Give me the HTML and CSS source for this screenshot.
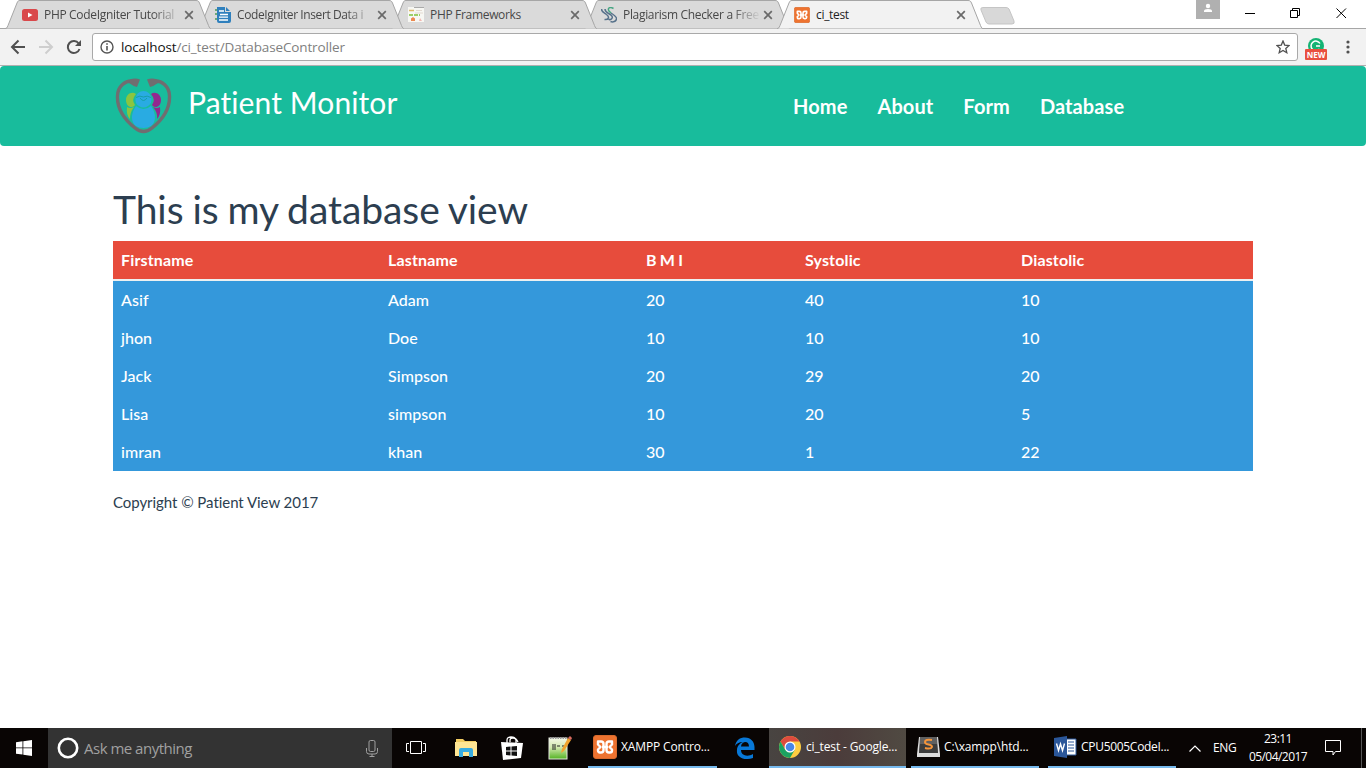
FILE: index.html
```html
<!DOCTYPE html>
<html lang="en">
<head>
<meta charset="utf-8">
<title>ci_test</title>
<link rel="stylesheet" href="styles.css">
</head>
<body>
<svg width="0" height="0" class="defs">
  <symbol id="tab" viewBox="0 0 206 29"><path d="M0 28.500C1.500 28.500 2 28 3 25.500L12 3C13 .7 13.500 .5 15 .5H191C193 .5 193.500 1 194.500 3L203.500 25.500C204.500 28 205 28.500 206 28.500"/></symbol>
  <symbol id="close" viewBox="0 0 10 10"><path d="M1.200 1.200L8.800 8.800M8.800 1.200L1.200 8.800" fill="none" stroke="#6a6a6a" stroke-width="1.700"/></symbol>
  <symbol id="xampp" viewBox="0 0 24 24"><rect x=".5" y=".5" width="23" height="23" rx="2.500" fill="#ee7330" stroke="#d96a2c"/><path d="M9 12H15M5 6.500H8Q10.500 6.500 10.500 9V15Q10.500 17.500 8 17.500H7Q5 17.500 5 15.500V14.500L7.500 12L5 9.500ZM19 6.500H16Q13.500 6.500 13.500 9V15Q13.500 17.500 16 17.500H17Q19 17.500 19 15.500V14.500L16.500 12L19 9.500Z" fill="none" stroke="#fff" stroke-width="2.400" stroke-linejoin="round"/></symbol>
</svg>

<header class="browser">
  <div class="strip">
    <div class="tab t1"><svg class="shape"><use href="#tab"/></svg>
      <svg class="fav" viewBox="0 0 16 16"><rect y="2" width="16" height="12" rx="2.500" fill="#d9484b"/><path d="M6 5.500V10.500L10.500 8Z" fill="#fff"/></svg>
      <span class="label fade">PHP CodeIgniter Tutorial</span><svg class="x"><use href="#close"/></svg></div>
    <div class="tab t2"><svg class="shape"><use href="#tab"/></svg>
      <svg class="fav" viewBox="0 0 16 16"><path d="M2 0H10V5H16V14Q16 16 14 16H4Q2 16 2 14Z" fill="#2f80bd"/><path d="M11 0L15 4H11Z" fill="#2f80bd"/><path d="M0 3H2M0 7H2M0 12H2" stroke="#4a9b57" stroke-width="1.500"/><path d="M4 4H9M5 7.500H13M4 10.200H13M4 13H13" stroke="#fff" stroke-width="1.300"/></svg>
      <span class="label fade">CodeIgniter Insert Data i</span><svg class="x"><use href="#close"/></svg></div>
    <div class="tab t3"><svg class="shape"><use href="#tab"/></svg>
      <svg class="fav" viewBox="0 0 16 16"><path d="M0 0H16V15H0Z" fill="#f7f7f3"/><path d="M6 .5H16" stroke="#aaa"/><path d="M1 3.500H6" stroke="#dfb967" stroke-width="1.500"/><path d="M8 3.500H14M7 6H15" stroke="#e3d9d0"/><path d="M1 8H12" stroke="#9ccf68" stroke-width="2" stroke-dasharray="4 1"/><path d="M3 14V11.500L5 10L7 11.500V14" fill="#ed8a51"/><path d="M11 14L12 11L14 14" fill="#f2b8b2"/></svg>
      <span class="label">PHP Frameworks</span><svg class="x"><use href="#close"/></svg></div>
    <div class="tab t4"><svg class="shape"><use href="#tab"/></svg>
      <svg class="fav" viewBox="0 0 16 16"><g fill="none" stroke="#56718a" stroke-width="1.500"><path d="M.5 2C.5 5 3 5.500 5.500 7.500C9 10 7.500 13 3.500 12.500"/><path d="M4 2C4 6 8 6 10.500 8.500C13 11.500 9 13.500 7.500 12"/><path d="M10 6C13 8 16 10 15.500 12C15 14.500 12 15.500 9.500 14.500"/></g><path d="M12.500 1.500C9 -.5 6 1 8 4L10 6" fill="none" stroke="#46a582" stroke-width="1.500"/></svg>
      <span class="label fade">Plagiarism Checker a Free</span><svg class="x"><use href="#close"/></svg></div>
    <div class="tab active"><svg class="shape"><use href="#tab"/></svg>
      <svg class="fav"><use href="#xampp"/></svg>
      <span class="label">ci_test</span><svg class="x"><use href="#close"/></svg></div>
    <svg class="newtab" viewBox="0 0 36 19"><path d="M3 .5H26Q28 .5 29 2L34 14Q35 17 32 17H9Q7 17 6 15L1 3Q0 .5 3 .5Z" fill="#d8d8d8" stroke="#c5c5c5"/></svg>
    <div class="window">
      <svg class="profile" viewBox="0 0 24 19"><path d="M0 0H24V19H0Z" fill="#b0b0b0"/><circle cx="12" cy="6" r="2.200" fill="#fff"/><path d="M8 12V11Q8 9 12 9T16 11V12Z" fill="#fff"/></svg>
      <svg class="controls" viewBox="0 0 146 28" fill="none" stroke="#000"><path d="M25 13.500H35M70.500 10.500H77.500V17.500H70.500ZM72.500 10V8.500H79.500V15.500H78M116.500 8.500L126 18M126 8.500L116.500 18"/></svg>
    </div>
  </div>
  <div class="toolbar">
    <svg class="nav" viewBox="0 0 92 37" fill="none" stroke-width="2"><path d="M25 18H12M18.500 11.500L12 18L18.500 24.500" stroke="#505050"/><path d="M39 18H52M45.500 11.500L52 18L45.500 24.500" stroke="#cecece"/><path d="M78.700 14.500A6 6 0 1 0 79.500 20" stroke="#505050"/><path d="M81 11V17H75Z" fill="#505050"/></svg>
    <div class="address">
      <svg class="info" viewBox="0 0 14 14"><circle cx="7" cy="7" r="6" fill="none" stroke="#555" stroke-width="1.400"/><path d="M7 6V10.500M7 3.200V4.800" stroke="#555" stroke-width="1.600"/></svg>
      <span class="url"><b>localhost</b>/ci_test/DatabaseController</span>
      <svg class="star" viewBox="0 0 14 14"><path d="M7 1L8.700 5.100L13.100 5.500L9.800 8.400L10.800 12.700L7 10.400L3.200 12.700L4.200 8.400L.9 5.500L5.300 5.100Z" fill="none" stroke="#505050" stroke-width="1.300"/></svg>
    </div>
    <div class="ext"><svg viewBox="0 0 22 22"><circle cx="11" cy="8" r="8" fill="#15b374"/><path d="M15 5.500A4.800 4.800 0 1 0 14.500 11M15 8H11" fill="none" stroke="#fff" stroke-width="1.500"/><rect y="11" width="22" height="11" rx="1" fill="#e9503f"/></svg><span class="new">NEW</span></div>
    <svg class="menu" viewBox="0 0 4 14" fill="#505050"><circle cx="2" cy="2" r="1.600"/><circle cx="2" cy="7" r="1.600"/><circle cx="2" cy="12" r="1.600"/></svg>
  </div>
</header>

<main class="page">
  <nav class="navbar">
    <svg class="logo" viewBox="0 0 58 58">
      <path d="M20 3.500C10 1 2.500 9 2.500 18C2 31 10 42 20 50Q28.500 57 37 50C47 42 55 31 54.500 18C54.500 9 47 1 37 3.500" fill="none" stroke="#706d70" stroke-width="3.400"/>
      <path d="M15 1.500Q20 -.5 25 1.500L22 9Q18 8 14 5ZM42 1.500Q37 -.5 32 1.500L35 9Q39 8 43 5Z" fill="#706d70"/>
      <path d="M21 16C17 13 11 16 11 22C11 29 17 31 20 27Q16 22 21 16ZM12 29Q15 31 19 29Q15 34 15 41Q11 37 12 29Z" fill="#8bc53f"/>
      <path d="M36 16C40 13 46 16 46 22C46 29 40 31 37 27Q41 22 36 16ZM45 29Q42 31 38 29Q43 35 42 41Q46 37 45 29Z" fill="#93278f"/>
      <path d="M28.500 13C20 13 18 25 24 28Q28.500 31 33 28C39 25 37 13 28.500 13ZM21 28Q28.500 34 36 28C43 38 41 50 28.500 50C16 50 14 38 21 28Z" fill="#29abe2"/>
      <path d="M21 19.500Q25 17 28.500 19Q32 17 36 19.500M25 20Q28.500 25 32 20" fill="none" stroke="#159ea9"/>
    </svg>
    <span class="brand">Patient Monitor</span>
    <div class="links"><a>Home</a><a>About</a><a>Form</a><a>Database</a></div>
  </nav>
  <section class="container">
    <h1>This is my database view</h1>
    <table>
      <colgroup><col class="c1"><col class="c2"><col class="c3"><col class="c4"><col></colgroup>
      <thead><tr><th>Firstname</th><th>Lastname</th><th class="bmi">B M I</th><th>Systolic</th><th>Diastolic</th></tr></thead>
      <tbody>
        <tr><td>Asif</td><td>Adam</td><td>20</td><td>40</td><td>10</td></tr>
        <tr><td>jhon</td><td>Doe</td><td>10</td><td>10</td><td>10</td></tr>
        <tr><td>Jack</td><td>Simpson</td><td>20</td><td>29</td><td>20</td></tr>
        <tr><td>Lisa</td><td>simpson</td><td>10</td><td>20</td><td>5</td></tr>
        <tr><td>imran</td><td>khan</td><td>30</td><td>1</td><td>22</td></tr>
      </tbody>
    </table>
    <footer>Copyright © Patient View 2017</footer>
  </section>
</main>

<div class="taskbar">
  <div class="start"><svg viewBox="0 0 16 16" fill="#fff"><path d="M0 2.200L6.500 1.300V7.500H0ZM7.300 1.200L16 0V7.500H7.300ZM0 8.300H6.500V14.600L0 13.700ZM7.300 8.300H16V16L7.300 14.700Z"/></svg></div>
  <div class="search">
    <svg class="cortana" viewBox="0 0 22 22"><circle cx="11" cy="11" r="9.200" fill="none" stroke="#fff" stroke-width="2.600"/></svg>
    <span>Ask me anything</span>
    <svg class="mic" viewBox="0 0 12 17" fill="none" stroke="#a0a0a0"><rect x="3" y=".5" width="6" height="11" rx="1.500"/><path d="M.5 8V11.500Q.5 14 3 14H9Q11.500 14 11.500 11.500V8M6 14V16M3.500 16.500H8.500"/></svg>
  </div>
  <div class="cell"><svg width="20" height="14" viewBox="0 0 20 14" fill="none" stroke="#fff"><path d="M4.500 .5H15.500V12.500H4.500ZM3 2.500H.5V10.500H3M17 2.500H19.500V10.500H17"/></svg></div>
  <div class="cell folder"><svg width="22" height="20" viewBox="0 0 22 20"><path d="M1 1H8L10 3H21V18H1Z" fill="#f3cd62"/><path d="M0 4H22V18H0Z" fill="#ffe694"/><path d="M4 19V12Q4 10 6 10H16Q18 10 18 12V19H14V14H8V19Z" fill="#38ace0"/></svg></div>
  <div class="cell"><svg width="22" height="24" viewBox="0 0 22 24"><path d="M6 7V4Q6 1 10 1T15 4V7M9 6V4Q9 2 12 2T17 6" fill="none" stroke="#fff" stroke-width="1.300"/><path d="M0 6L22 7L20 22L2 24Z" fill="#fff"/><path d="M5 11L9.500 10.500V14.500H5ZM10.500 10.500L16 10V14.500H10.500ZM5 15.500H9.500V19.500L5 19ZM10.500 15.500H16V20L10.500 19.500Z" fill="#111"/></svg></div>
  <div class="cell notepad"><svg width="24" height="24" viewBox="0 0 24 24"><defs><linearGradient id="g" x2="0" y2="1"><stop stop-color="#f5f8e8"/><stop offset=".45" stop-color="#d2e9ae"/><stop offset="1" stop-color="#53b222"/></linearGradient></defs><rect x="1" y="2" width="18" height="21" fill="url(#g)" stroke="#e5eadf"/><path d="M2 2H19" stroke="#999" stroke-width="2" stroke-dasharray="1.500 1"/><path d="M5 8V14M7 8V14M9 10H12M14 10H16" stroke="#222"/><path d="M20 2L23 4L16 15L13 17L14 13Z" fill="#f2a42d"/><path d="M20 2L22 0L24 2L23 4Z" fill="#db6c61"/></svg></div>
  <div class="task xamppTask"><svg width="24" height="24"><use href="#xampp"/></svg><span>XAMPP Contro...</span></div>
  <div class="edge"><svg width="21" height="22" viewBox="0 0 21 22"><path d="M1 9C2 3 6 .5 11 .5C17 .5 20.500 5 20.500 10V13H7C7 19 14 20 19 17V21C10 24 2 20 3 13C3 9 6 6 9 5C5 5 2 7 1 9ZM7 9.500H15C15 3 7.500 4 7 9.500Z" fill="#0878d7" fill-rule="evenodd"/></svg></div>
  <div class="task chrome"><svg width="22" height="22" viewBox="0 0 22 22"><circle cx="11" cy="11" r="11" fill="#ffcd41"/><path d="M1.500 5.500A11 11 0 0 1 20.500 5.500H11L6.200 13.700Z" fill="#dd4b3e"/><path d="M1.500 5.500L6.200 13.700L11 16.500L15.800 13.700L11 22A11 11 0 0 1 1.500 5.500Z" fill="#1ba261"/><circle cx="11" cy="11" r="5.500" fill="#fff"/><circle cx="11" cy="11" r="4.300" fill="#4a87e8"/></svg><span>ci_test - Google...</span></div>
  <div class="task sublime"><svg width="23" height="22" viewBox="0 0 23 22"><path d="M2 1H21L23 18V21H0V18Z" fill="#ddd"/><path d="M3 1H20L21 17H2Z" fill="#606060"/><path d="M3 8H20L21 17H2Z" fill="#3d3d3d"/><path d="M15 4Q8 3 8 6Q8 8 11.500 8.500Q15 9 15 11Q14 13.500 8 12" fill="none" stroke="#f6953a" stroke-width="2"/></svg><span>C:\xampp\htd...</span></div>
  <div class="task word"><svg width="23" height="22" viewBox="0 0 23 22"><path d="M11 3H22V19H11Z" fill="#fff" stroke="#2b579a"/><path d="M14 6H20M14 9H20M14 12H20M14 15H20" stroke="#2b579a"/><path d="M0 2L13 0V22L0 20Z" fill="#2b579a"/><path d="M2.500 7.500L4.500 14.500L6.500 8L8.500 14.500L10.500 7.500" fill="none" stroke="#fff" stroke-width="1.400"/></svg><span>CPU5005CodeI...</span></div>
  <div class="tray">
    <svg class="chev" viewBox="0 0 12 7"><path d="M.5 6.500L6 1L11.500 6.500" fill="none" stroke="#fff" stroke-width="1.200"/></svg>
    <span class="lang">ENG</span>
    <div class="clock"><span class="time">23:11</span><span>05/04/2017</span></div>
    <svg class="note" viewBox="0 0 17 16"><path d="M.5 .5H15.500V11.500H10.500L8 15L8 11.500H.5Z" fill="none" stroke="#fff"/></svg>
    <i class="desktop"></i>
  </div>
</div>
</body>
</html>
```
FILE: styles.css
```css
* { box-sizing: border-box; }
body { margin: 0; width: 1366px; height: 768px; overflow: hidden; display: flex; flex-direction: column; background: #fff; font-family: Lato, sans-serif; font-variant-ligatures: none; }
svg { display: block; flex: none; }
.defs { position: absolute; }

.browser { height: 66px; flex: none; font-family: "Open Sans", "Noto Sans", sans-serif; }
.strip { height: 29px; display: flex; padding-left: 5px; box-shadow: inset 0 -1px #a6a6a6; }
.tab { position: relative; flex: none; width: 206px; height: 29px; margin-right: -13px; padding: 1px 17px 0; display: flex; align-items: center; font-size: 12px; letter-spacing: -.32px; color: #484848; }
.shape { position: absolute; left: 0; top: 0; width: 206px; height: 29px; fill: #dadada; stroke: #a6a6a6; }
.t1 { z-index: 4; }
.t2 { z-index: 3; letter-spacing: -.4px; }
.t3 { z-index: 2; }
.t4 { z-index: 1; }
.active { z-index: 5; color: #222; }
.active .shape { fill: #f2f2f2; }
.fav { position: relative; width: 16px; height: 16px; margin-right: 6px; }
.fav use[href="#xampp"] { width: 16px; height: 16px; }
.label { position: relative; flex: 1; min-width: 0; white-space: nowrap; line-height: 18px; margin-right: 4px; }
.fade { -webkit-mask-image: linear-gradient(90deg, #000 108px, transparent 138px); mask-image: linear-gradient(90deg, #000 108px, transparent 138px); }
.x { position: relative; width: 10px; height: 10px; }
.newtab { width: 36px; height: 19px; margin: 7px 0 0 10px; }
.window { display: flex; margin-left: auto; }
.profile { width: 24px; height: 19px; }
.controls { width: 146px; height: 28px; }

.toolbar { height: 37px; display: flex; align-items: center; background: #f2f2f2; border-bottom: 1px solid #b0b0b0; }
.nav { width: 92px; height: 37px; }
.address { width: 1206px; height: 28px; border: 1px solid #a9a9a9; border-radius: 3px; background: #fff; display: flex; align-items: center; padding: 0 7px; }
.info { width: 14px; height: 14px; }
.url { margin-left: 7px; font-size: 13.5px; letter-spacing: -.13px; color: #808080; line-height: 20px; }
.url b { color: #111; font-weight: 400; }
.star { width: 14px; height: 14px; margin-left: auto; }
.ext { position: relative; width: 22px; height: 22px; margin-left: 7px; margin-top: 3px; }
.ext svg { width: 22px; height: 22px; }
.new { position: absolute; left: 0; top: 11px; width: 22px; text-align: center; font: bold 8px/11px "Open Sans", sans-serif; color: #fff; }
.menu { width: 4px; height: 14px; margin-left: 19px; }

.page { flex: 1; color: #2c3e50; }
.navbar { height: 80px; background: #18bc9c; border-radius: 4px; display: flex; align-items: center; padding-left: 115px; color: #fff; }
.logo { width: 58px; height: 58px; margin-top: 2px; }
.brand { margin: -8px 0 0 15px; width: 605px; font-size: 30px; line-height: 40px; letter-spacing: .1px; }
.links { display: flex; gap: 30px; font-size: 20px; font-weight: 700; letter-spacing: .1px; }
.container { width: 1140px; margin-left: 113px; padding-top: 42px; }
h1 { margin: 0 0 10px; font-size: 39px; line-height: 43px; font-weight: 400; letter-spacing: -.05px; word-spacing: -1px; }
table { width: 1140px; border-collapse: separate; border-spacing: 0; table-layout: fixed; font-size: 16px; color: #fff; }
th, td { height: 38px; padding: 0 8px; text-align: left; line-height: 22px; }
th { height: 40px; background: #e74c3c; background-clip: padding-box; font-weight: 700; border-bottom: 2px solid #ecf0f1; letter-spacing: .15px; }
.bmi { letter-spacing: -.3px; }
td { background: #3498db; font-weight: 500; letter-spacing: .05px; }
.c1 { width: 267px; }
.c2 { width: 258px; }
.c3 { width: 159px; }
.c4 { width: 216px; }
footer { margin-top: 21px; font-size: 15px; line-height: 21px; letter-spacing: -.05px; }

.taskbar { height: 40px; flex: none; display: flex; background: #090504; color: #fff; font: 12px/18px "Open Sans", "Noto Sans", sans-serif; }
.start { width: 48px; padding: 12px 16px; }
.start svg { width: 16px; height: 16px; }
.search { width: 344px; display: flex; align-items: center; padding: 0 14px 0 9px; background: #333; color: #a0a0a0; font-size: 15px; letter-spacing: -.5px; }
.cortana { width: 22px; height: 22px; margin-right: 5px; }
.mic { width: 12px; height: 17px; margin-left: auto; }
.cell { width: 48px; display: flex; align-items: center; justify-content: center; }
.folder { padding-left: 3px; }
.notepad { padding-left: 0; }
.task { height: 40px; display: flex; align-items: center; gap: 4px; border-bottom: 2px solid #76b9ed; white-space: nowrap; letter-spacing: -.14px; flex: none; }
.xamppTask { width: 129px; margin-left: 4px; padding-left: 5px; }
.xamppTask use { width: 24px; height: 24px; }
.edge { width: 52px; display: flex; align-items: center; justify-content: center; padding-left: 2px; }
.chrome { width: 137px; padding-left: 10px; gap: 5px; background: linear-gradient(90deg, #484441, #4b3c3b 50%, #504a42); }
.sublime { width: 128px; margin-left: 5px; padding-left: 6px; }
.word { width: 128px; margin-left: 9px; padding-left: 6px; letter-spacing: -.3px; }
.tray { flex: 1; display: flex; align-items: center; }
.chev { width: 12px; height: 7px; margin-left: 13px; }
.lang { margin-left: 12px; letter-spacing: -.3px; width: 24px; }
.clock { width: 60px; margin-left: 11px; display: flex; flex-direction: column; align-items: center; letter-spacing: -.55px; }
.clock span { height: 18px; }
.note { width: 17px; height: 16px; margin-left: 17px; }
.desktop { width: 1px; height: 40px; margin-left: auto; margin-right: 4px; background: #555; }
```
